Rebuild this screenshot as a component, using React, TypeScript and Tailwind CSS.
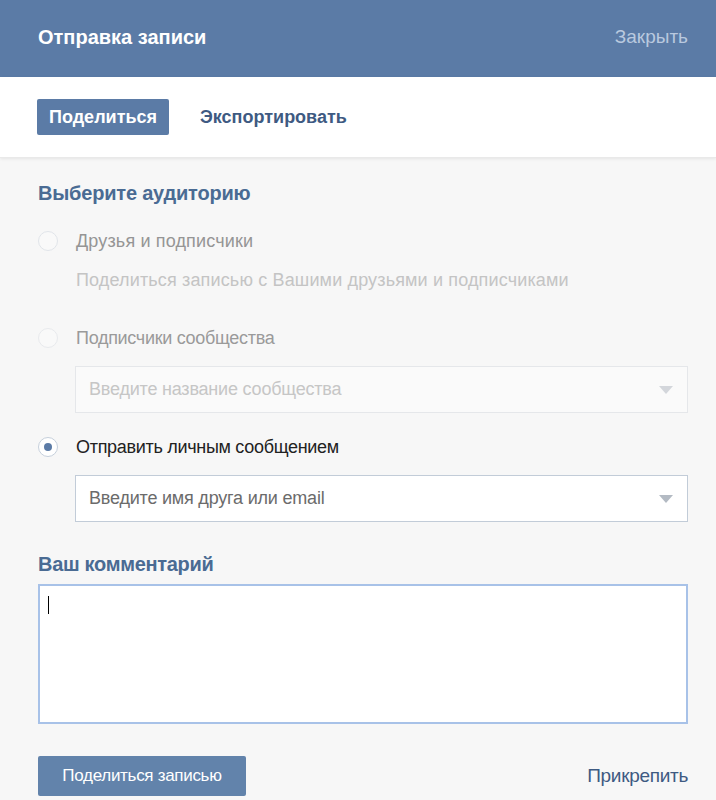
export default function App() {
  return (
    <div className="w-[716px] h-[800px] overflow-hidden bg-[#f7f7f7] font-['Liberation_Sans',Arial,sans-serif]">
      {/* Header */}
      <div className="h-[77px] bg-[#5b7ba6] flex items-center justify-between pl-[38px] pr-[28px] pb-[3px]">
        <span className="text-white font-bold text-[20px] leading-[24px]">Отправка записи</span>
        <span className="text-[#b9c9df] text-[19px] leading-[24px]">Закрыть</span>
      </div>

      {/* Tabs */}
      <div className="h-[81px] bg-white flex items-center gap-[31px] px-[37px] shadow-[0_1px_3px_rgba(0,0,0,0.08)] border-b border-[#e9e9e9]">
        <div className="h-[36px] px-[12px] flex items-center bg-[#5b7ba6] rounded-[2px] text-white font-bold text-[18px]">
          Поделиться
        </div>
        <span className="text-[#3e5a82] font-bold text-[18px]">Экспортировать</span>
      </div>

      {/* Body */}
      <div className="pl-[38px] pr-[28px] pt-[23px]">
        <div className="text-[#4a6b93] font-bold text-[20px] leading-[24px] tracking-[-0.2px]">Выберите аудиторию</div>

        <div className="mt-[24px] h-[24px] flex items-center gap-[18px]">
          <div className="w-[20px] h-[20px] rounded-full border border-[#e1e5ea] bg-[#f9f9f9]" />
          <span className="text-[#959595] text-[18px] leading-[24px] tracking-[0.15px]">Друзья и подписчики</span>
        </div>
        <div className="ml-[38px] mt-[15px] text-[#c4c4c4] text-[18px] leading-[24px] tracking-[0.15px]">
          Поделиться записью с Вашими друзьями и подписчиками
        </div>

        <div className="mt-[34px] h-[24px] flex items-center gap-[18px]">
          <div className="w-[20px] h-[20px] rounded-full border border-[#e8eaed] bg-[#f9f9f9]" />
          <span className="text-[#9a9a9a] text-[18px] leading-[24px] tracking-[-0.3px]">Подписчики сообщества</span>
        </div>
        <div className="ml-[37px] mt-[16px] h-[47px] border border-[#e5e7ea] bg-[#fafafa] flex items-center justify-between pl-[13px] pr-[14px]">
          <span className="text-[#c6c6c6] text-[18px] tracking-[-0.2px]">Введите название сообщества</span>
          <svg width="14" height="8" viewBox="0 0 14 8">
            <path d="M0 0h14L7 8z" fill="#d3d6db" />
          </svg>
        </div>

        <div className="mt-[22px] h-[24px] flex items-center gap-[18px]">
          <div className="w-[20px] h-[20px] rounded-full border border-[#c6d0dc] bg-white flex items-center justify-center">
            <div className="w-[8px] h-[8px] rounded-full bg-[#5b7ba6]" />
          </div>
          <span className="text-[#222] text-[18px] leading-[24px] tracking-[-0.3px]">Отправить личным сообщением</span>
        </div>
        <div className="ml-[37px] mt-[16px] h-[47px] border border-[#c2ccd8] bg-white flex items-center justify-between pl-[13px] pr-[14px]">
          <span className="text-[#6b6b6b] text-[18px] tracking-[-0.2px]">Введите имя друга или email</span>
          <svg width="14" height="8" viewBox="0 0 14 8">
            <path d="M0 0h14L7 8z" fill="#b3bac3" />
          </svg>
        </div>

        <div className="mt-[30px] text-[#4a6b93] font-bold text-[20px] leading-[24px] tracking-[-0.3px]">Ваш комментарий</div>
        <div className="mt-[8px] h-[140px] border-2 border-[#a8c2e8] bg-white pl-[8px] pt-[10px]">
          <div className="w-px h-[18px] bg-black" />
        </div>

        <div className="mt-[32px] flex items-center justify-between">
          <div className="h-[40px] w-[208px] bg-[#6283ab] rounded-[2px] flex items-center justify-center text-white text-[17px] tracking-[-0.3px]">
            Поделиться записью
          </div>
          <span className="text-[#3e5a82] text-[19px] leading-[24px] tracking-[-0.3px]">Прикрепить</span>
        </div>
      </div>
    </div>
  )
}
